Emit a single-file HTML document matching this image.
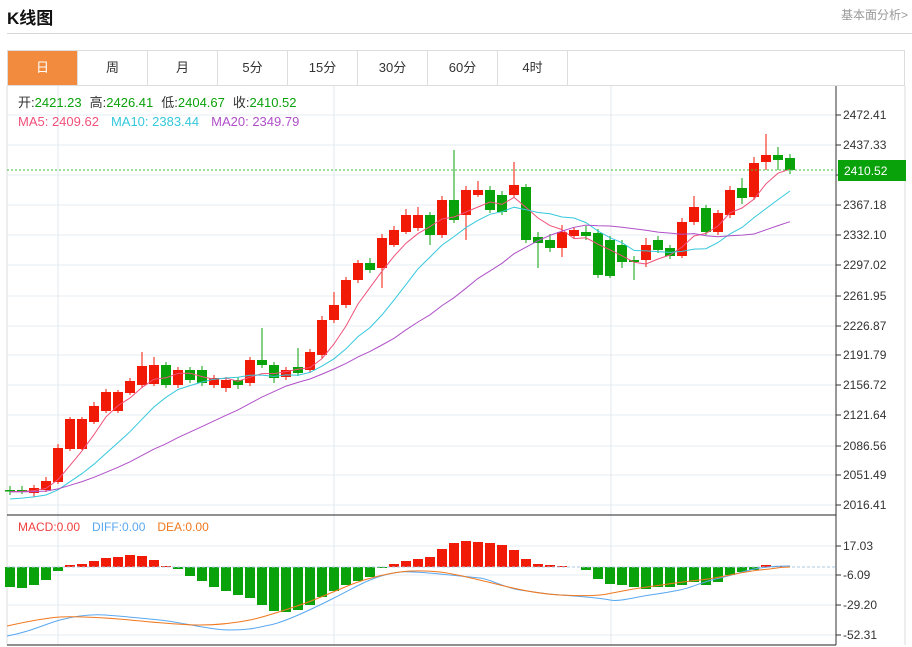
<!DOCTYPE html>
<html><head><meta charset="utf-8"><style>
body{margin:0;width:912px;height:647px;background:#fff;font-family:"Liberation Sans","Noto Sans CJK SC",sans-serif;overflow:hidden;position:relative}
.t{position:absolute;left:7px;top:4px;font-size:17px;font-weight:bold;color:#111}
.more{position:absolute;right:4px;top:6px;font-size:12px;color:#999}
.hl{position:absolute;left:7px;top:33px;width:905px;height:1px;background:#d6d6d6}
.tabs{position:absolute;left:7px;top:50px;width:898px;height:36px;border:1px solid #ddd;box-sizing:border-box;display:flex}
.tabs div{width:69px;border-right:1px solid #ddd;text-align:center;line-height:34px;font-size:13px;color:#333}
.tabs div.on{background:#f28b3d;color:#fff}
svg{position:absolute;left:0;top:0}
</style></head><body>
<div class="t">K线图</div><div class="more">基本面分析&gt;</div><div class="hl"></div>
<div class="tabs"><div class="on">日</div><div>周</div><div>月</div><div>5分</div><div>15分</div><div>30分</div><div>60分</div><div>4时</div></div>
<svg id="s" width="912" height="647" font-family="Liberation Sans, Noto Sans CJK SC, sans-serif"></svg>
<script>
var s=document.getElementById('s'),h='';
function L(a,b,c,d,col,w,ex){h+='<line x1="'+a+'" y1="'+b+'" x2="'+c+'" y2="'+d+'" stroke="'+col+'" stroke-width="'+(w||1)+'" '+(ex||'')+'/>';}
function T(x,y,t,c,a){h+='<text x="'+x+'" y="'+y+'" font-size="12" fill="'+c+'"'+(a?' text-anchor="'+a+'"':'')+'>'+t+'</text>';}
L(7,86,7,645,'#ddd');L(905,86,905,645,'#ddd');
var gy=[115,145,175,205,235,265,296,326,355,385,415,446,475,505];
gy.forEach(function(y){L(7,y,836,y,'#e6ecf2');L(836,y,841,y,'#333');});
[546,575,605,635].forEach(function(y){L(7,y,836,y,'#e6ecf2');L(836,y,841,y,'#333');});
[58,334,611].forEach(function(x){L(x,86,x,645,'#e1e8ef');});
L(7,515,836,515,'#222');L(7,645,836,645,'#222');L(836,86,836,645,'#333');
var lab=['2472.41','2437.33','','2367.18','2332.10','2297.02','2261.95','2226.87','2191.79','2156.72','2121.64','2086.56','2051.49','2016.41'];
gy.forEach(function(y,i){if(lab[i])T(843,y+4,lab[i],'#333');});
T(843,550,'17.03','#333');T(843,579,'-6.09','#333');T(843,609,'-29.20','#333');T(843,639,'-52.31','#333');
var d=[[490,490,486,495,'g'],[490,491,486,494,'g'],[488,493,485,497,'r'],[481,490,477,492,'r'],[448,482,444,484,'r'],[419,449,417,451,'r'],[419,449,417,450,'r'],[406,422,402,424,'r'],[392,411,389,413,'r'],[392,411,390,413,'r'],[381,393,378,395,'r'],[366,385,352,388,'r'],[365,384,357,386,'r'],[365,385,362,388,'g'],[370,385,367,388,'r'],[370,380,367,383,'g'],[370,383,366,386,'g'],[378,385,375,388,'r'],[380,388,377,392,'r'],[380,385,377,389,'g'],[360,383,357,386,'r'],[360,365,328,368,'g'],[365,378,362,383,'g'],[370,377,367,380,'r'],[367,373,348,376,'g'],[352,370,349,373,'r'],[320,355,316,358,'r'],[305,320,292,323,'r'],[280,305,277,308,'r'],[263,280,260,283,'r'],[263,270,258,273,'g'],[238,268,234,288,'r'],[230,245,226,247,'r'],[215,232,209,234,'r'],[215,228,207,231,'r'],[215,235,212,245,'g'],[200,235,196,238,'r'],[200,220,150,223,'g'],[190,215,186,240,'r'],[190,195,181,197,'r'],[190,210,186,213,'g'],[195,212,191,215,'g'],[185,195,162,198,'r'],[187,240,184,243,'g'],[237,243,232,268,'g'],[240,248,234,252,'g'],[232,248,225,257,'r'],[230,236,227,238,'r'],[232,236,226,240,'g'],[233,275,229,278,'g'],[240,276,236,278,'g'],[245,262,240,268,'g'],[260,262,256,280,'g'],[245,260,238,267,'r'],[240,250,236,253,'g'],[248,256,245,259,'g'],[222,256,218,258,'r'],[207,222,196,225,'r'],[208,232,205,235,'g'],[213,232,210,235,'r'],[190,215,186,218,'r'],[188,198,178,204,'g'],[163,197,157,200,'r'],[155,162,134,170,'r'],[155,160,147,170,'g'],[158,170,154,174,'g']];
var R='#f01a06',G='#0aa20a',cl=[];
d.forEach(function(c,i){var x=10+i*12,col=c[4]=='r'?R:G;L(x,c[2],x,c[3],col);h+='<rect x="'+(x-5)+'" y="'+c[0]+'" width="10" height="'+Math.max(1.5,c[1]-c[0])+'" fill="'+col+'"/>';cl.push(c[4]=='r'?c[0]:c[1]);});
function ma(n,col,pre){var p='';for(var i=0;i<cl.length;i++){var a=0,k=0;for(var j=i;j>i-n;j--){a+=j>=0?cl[j]:pre;k++;}p+=(i?'L':'M')+(10+i*12)+' '+(a/k).toFixed(1);}h+='<path d="'+p+'" fill="none" stroke="'+col+'" stroke-width="1"/>';}
ma(5,'#f0507a',492);ma(10,'#35c8dc',500);ma(20,'#b050c8',492);
L(7,170,836,170,'#3cbf3c',1,'stroke-dasharray="2,2"');
h+='<rect x="838" y="160" width="68" height="21" fill="#0aa20a"/>';T(844,175,'2410.52','#fff');
var m=[-20,-21,-18,-13,-4,2,3,6,9,10,12,11,7,1,-2,-9,-14,-20,-24,-28,-31,-38,-44,-45,-43,-38,-30,-24,-18,-14,-10,-1,3,6,8,10,18,24,26,25,24,22,17,8,3,2,1,0,-3,-12,-17,-18,-20,-22,-20,-20,-18,-15,-18,-15,-8,-5,-3,2,1,0];
m.forEach(function(v,i){var x=10+i*12;if(v>0)h+='<rect x="'+(x-5)+'" y="'+(567-v)+'" width="10" height="'+v+'" fill="'+R+'"/>';else if(v<0)h+='<rect x="'+(x-5)+'" y="567" width="10" height="'+(-v)+'" fill="'+G+'"/>';});
L(7,567,836,567,'#aac8e0',1,'stroke-dasharray="3,2"');
h+='<path d="M7 636 C30 632 45 624 60 620 S90 614 105 615 S140 618 160 620 S210 630 230 630 S255 628 270 625 S310 610 330 600 S360 584 370 580 S390 573 400 572 S440 574 450 575 S470 577 480 578 S505 588 520 590 S545 594 560 595 S600 598 610 600 S635 597 650 595 S670 592 680 590 S705 581 720 578 S745 570 760 568 S780 566 790 566" fill="none" stroke="#5aa8f0" stroke-width="1"/>';
h+='<path d="M7 626 C25 622 45 618 60 617 S110 618 130 620 S180 625 200 625 S235 623 250 620 S285 610 300 605 S335 591 350 585 S385 574 400 572 S430 571 440 572 S480 580 500 585 S540 594 560 595 S590 596 600 595 S625 590 640 588 S680 582 700 580 S740 572 760 570 S780 567 790 567" fill="none" stroke="#f0781e" stroke-width="1"/>';
h+='<text x="18" y="107" font-size="13"><tspan fill="#333">开:</tspan><tspan fill="#0aa20a">2421.23</tspan><tspan fill="#333" dx="8">高:</tspan><tspan fill="#0aa20a">2426.41</tspan><tspan fill="#333" dx="8">低:</tspan><tspan fill="#0aa20a">2404.67</tspan><tspan fill="#333" dx="8">收:</tspan><tspan fill="#0aa20a">2410.52</tspan></text>';
h+='<text x="18" y="126" font-size="13"><tspan fill="#f0507a">MA5: 2409.62</tspan><tspan fill="#35c8dc" dx="12">MA10: 2383.44</tspan><tspan fill="#b050c8" dx="12">MA20: 2349.79</tspan></text>';
h+='<text x="18" y="531" font-size="12"><tspan fill="#f04040">MACD:0.00</tspan><tspan fill="#5aa8f0" dx="12">DIFF:0.00</tspan><tspan fill="#f0781e" dx="12">DEA:0.00</tspan></text>';
s.innerHTML=h;
</script>
</body></html>
